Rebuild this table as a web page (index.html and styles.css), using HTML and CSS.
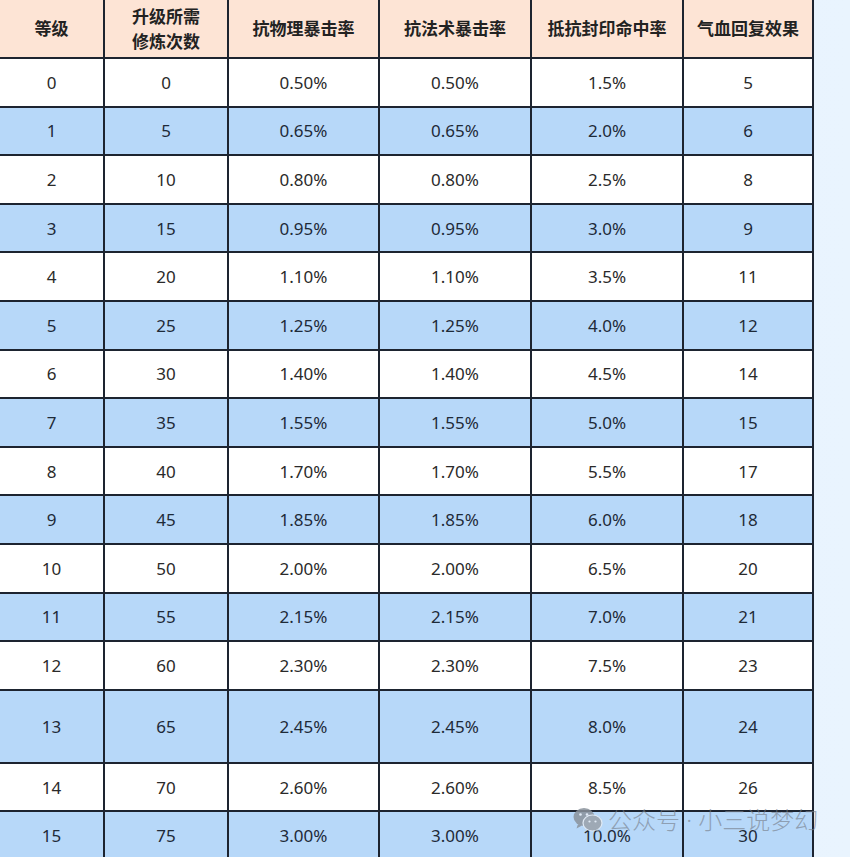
FILE: index.html
```html
<!DOCTYPE html>
<html lang="zh">
<head>
<meta charset="utf-8">
<link rel="stylesheet" href="styles.css">
</head>
<body>
<div class="page">
  <table class="grid">
    <colgroup>
      <col class="c1"><col class="c2"><col class="c3"><col class="c4"><col class="c5"><col class="c6">
    </colgroup>
    <thead>
      <tr class="head">
        <th>等级</th><th>升级所需<br>修炼次数</th><th>抗物理暴击率</th><th>抗法术暴击率</th><th>抵抗封印命中率</th><th>气血回复效果</th>
      </tr>
    </thead>
    <tbody>
      <tr><td>0</td><td>0</td><td>0.50%</td><td>0.50%</td><td>1.5%</td><td>5</td></tr>
      <tr class="blue"><td>1</td><td>5</td><td>0.65%</td><td>0.65%</td><td>2.0%</td><td>6</td></tr>
      <tr><td>2</td><td>10</td><td>0.80%</td><td>0.80%</td><td>2.5%</td><td>8</td></tr>
      <tr class="blue"><td>3</td><td>15</td><td>0.95%</td><td>0.95%</td><td>3.0%</td><td>9</td></tr>
      <tr><td>4</td><td>20</td><td>1.10%</td><td>1.10%</td><td>3.5%</td><td>11</td></tr>
      <tr class="blue"><td>5</td><td>25</td><td>1.25%</td><td>1.25%</td><td>4.0%</td><td>12</td></tr>
      <tr><td>6</td><td>30</td><td>1.40%</td><td>1.40%</td><td>4.5%</td><td>14</td></tr>
      <tr class="blue"><td>7</td><td>35</td><td>1.55%</td><td>1.55%</td><td>5.0%</td><td>15</td></tr>
      <tr><td>8</td><td>40</td><td>1.70%</td><td>1.70%</td><td>5.5%</td><td>17</td></tr>
      <tr class="blue"><td>9</td><td>45</td><td>1.85%</td><td>1.85%</td><td>6.0%</td><td>18</td></tr>
      <tr><td>10</td><td>50</td><td>2.00%</td><td>2.00%</td><td>6.5%</td><td>20</td></tr>
      <tr class="blue"><td>11</td><td>55</td><td>2.15%</td><td>2.15%</td><td>7.0%</td><td>21</td></tr>
      <tr><td>12</td><td>60</td><td>2.30%</td><td>2.30%</td><td>7.5%</td><td>23</td></tr>
      <tr class="blue tall"><td>13</td><td>65</td><td>2.45%</td><td>2.45%</td><td>8.0%</td><td>24</td></tr>
      <tr><td>14</td><td>70</td><td>2.60%</td><td>2.60%</td><td>8.5%</td><td>26</td></tr>
      <tr class="blue"><td>15</td><td>75</td><td>3.00%</td><td>3.00%</td><td>10.0%</td><td>30</td></tr>
    </tbody>
  </table>
  <div class="watermark">
    <svg class="wm-icon" viewBox="0 0 30 26" width="30" height="26" aria-hidden="true">
      <ellipse cx="11" cy="10" rx="10.5" ry="9" fill="#8a929c"/>
      <path d="M5 17 L3.5 21.5 L9 18.5 Z" fill="#8a929c"/>
      <ellipse cx="19.5" cy="16" rx="9.5" ry="8" fill="#9aa1aa" stroke="#e8eef5" stroke-width="1.2"/>
      <path d="M25 22.5 L27 25.5 L21.5 23.5 Z" fill="#9aa1aa"/>
      <circle cx="7.5" cy="7.5" r="1.3" fill="#e8eef5"/>
      <circle cx="14" cy="7.5" r="1.3" fill="#e8eef5"/>
      <circle cx="16.5" cy="14.5" r="1.1" fill="#e8eef5"/>
      <circle cx="22.5" cy="14.5" r="1.1" fill="#e8eef5"/>
    </svg>
    <span class="wm-text">公众号<span class="wm-sep"> · </span>小三说梦幻</span>
  </div>
</div>
</body>
</html>
```

FILE: styles.css
```css
html, body {
  margin: 0;
  padding: 0;
}
body {
  background: linear-gradient(90deg, #e4f0fc 0%, #e9f4fe 100%);
  font-family: "Noto Sans", "Noto Sans CJK SC", sans-serif;
  color: #222;
  overflow: hidden;
  width: 850px;
  height: 857px;
}
.page {
  position: relative;
  width: 850px;
  height: 857px;
  overflow: hidden;
}
.grid {
  border-collapse: collapse;
  table-layout: fixed;
  width: 814px;
  margin-left: -2px;
  margin-top: -4px;
}
.c1 { width: 105px; }
.c2 { width: 124px; }
.c3 { width: 151px; }
.c4 { width: 152px; }
.c5 { width: 152px; }
.c6 { width: 130px; }
.grid th, .grid td {
  border: 2px solid #1d2430;
  text-align: center;
  vertical-align: middle;
  padding: 0;
}
.grid th {
  background: #fde4d5;
  font-family: "Noto Sans CJK SC", sans-serif;
  font-weight: 700;
  font-size: 17px;
  line-height: 25px;
  height: 59px;
  color: #222;
}
.grid td {
  font-size: 17px;
  height: 46.6px;
  background: #ffffff;
  color: #2a2a2a;
}
.grid tr.blue td {
  background: #b7d8f9;
  color: #1e2a38;
}
.grid tr.tall td {
  height: 71px;
}
.watermark {
  position: absolute;
  left: 573px;
  top: 802px;
  display: flex;
  align-items: center;
  gap: 5px;
  opacity: 0.85;
}
.wm-icon {
  display: block;
}
.wm-text {
  font-family: "Noto Sans CJK SC", sans-serif;
  font-size: 24px;
  font-weight: 300;
  line-height: 34px;
  color: rgba(120, 128, 140, 0.75);
}
.wm-sep {
  font-family: "Noto Sans", sans-serif;
}
```
